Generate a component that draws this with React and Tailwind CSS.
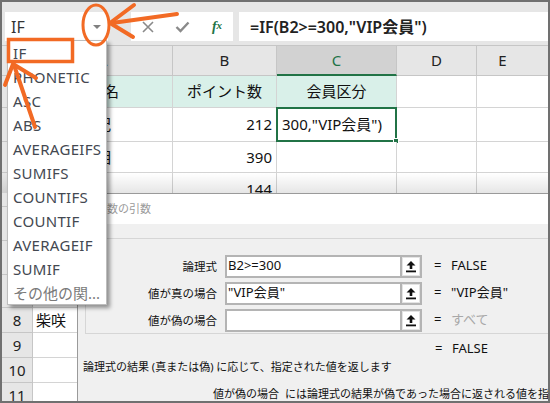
import React from "react";

const FUNCS = ["IF", "PHONETIC", "ASC", "ABS", "AVERAGEIFS", "SUMIFS", "COUNTIFS", "COUNTIF", "AVERAGEIF", "SUMIF"];

const ROWS = [
  { n: 1, h: "h-[32px]", head: true },
  { n: 2, h: "h-[34px]", a: "高橋　由紀", b: "212", active: true },
  { n: 3, h: "h-[31px]", a: "山田　明相", b: "390" },
  { n: 4, h: "h-[34px]", a: "佐藤　恵", b: "144" },
  { n: 5, h: "h-[34px]" },
  { n: 6, h: "h-[34px]" },
  { n: 7, h: "h-[33px]" },
  { n: 8, h: "h-[25px]", a: "柴咲　コウ" },
  { n: 9, h: "h-[25px]", plain: true },
  { n: 10, h: "h-[25px]", plain: true },
  { n: 11, h: "h-[25px]", plain: true },
];

function UpIcon() {
  return (
    <svg width="12" height="13" viewBox="0 0 12 13">
      <path d="M6 1 L10.5 5.5 L7.3 5.5 L7.3 9 L4.7 9 L4.7 5.5 L1.5 5.5 Z" fill="#111" />
      <rect x="1" y="10.5" width="10" height="1.8" fill="#111" />
    </svg>
  );
}

function ArgRow({ label, value, result, dim }) {
  return (
    <div className="flex items-center h-[23px]">
      <div className="w-[131px] text-right text-[11.5px] text-[#111]">{label}</div>
      <div className="ml-[8px] w-[197px] h-full flex border-2 border-[#b4b4b4] bg-white">
        <div className="flex-1 flex items-center pl-[1px] text-[13px] text-[#111] whitespace-nowrap">{value}</div>
        <div className="w-[20px] border-l-2 border-[#b4b4b4] bg-[#e4e4e4] p-[1px] flex">
          <div className="flex-1 bg-white flex items-center justify-center"><UpIcon /></div>
        </div>
      </div>
      <div className="ml-[12px] w-[10px] text-[13px] text-[#111]">=</div>
      <div className={`ml-[7px] text-[13px] whitespace-nowrap ${dim ? "text-[#a8a8a8]" : "text-[#111]"}`}>{result}</div>
    </div>
  );
}

export default function App() {
  const grid = "border-[#d4d4d4]";
  const teal = "border-[#7cbfa6]";
  return (
    <div className="relative w-[550px] h-[403px] overflow-hidden border-2 border-[#707070] bg-[#e6e6e6] font-['Noto_Sans','Noto_Sans_CJK_JP',sans-serif] text-[#111]">
      {/* formula bar */}
      <div className="flex h-[29px] mt-[10px]">
        <div className="relative ml-[3px] w-[103px] bg-white flex items-center">
          <span className="pl-[6px] text-[16px] text-[#333]">IF</span>
          <span className="absolute left-[88px] top-[13px] w-0 h-0 border-l-[4px] border-r-[4px] border-t-[4px] border-l-transparent border-r-transparent border-t-[#808080]" />
        </div>
        <div className="ml-[23px] w-[102px] bg-white flex items-center">
          <div className="w-[34px] flex justify-center">
            <svg width="12" height="12" viewBox="0 0 12 12"><path d="M1 1 L11 11 M11 1 L1 11" stroke="#8a8a8a" strokeWidth="1.6" /></svg>
          </div>
          <div className="w-[34px] flex justify-center">
            <svg width="15" height="12" viewBox="0 0 15 12"><path d="M1.5 6 L5.5 10 L13.5 1.5" stroke="#8a8a8a" strokeWidth="2.4" fill="none" /></svg>
          </div>
          <div className="w-[34px] flex justify-center pl-[2px] font-['Liberation_Serif',serif] italic font-bold text-[#217346] text-[14px] leading-none">
            f<span className="text-[11px]">x</span>
          </div>
        </div>
        <div className="ml-[6px] flex-1 bg-white flex items-center pl-[11px] text-[16px] font-semibold text-[#222] whitespace-nowrap">
          =IF(B2&gt;=300,"VIP会員")
        </div>
      </div>

      {/* column headers */}
      <div className="flex h-[31px] mt-[4px] text-[15px] text-[#222]">
        <div className="w-[31px] border-r border-b border-t border-[#c6c6c6]" />
        <div className="w-[140px] flex items-center justify-center border-r border-b border-t border-[#c6c6c6]">A</div>
        <div className="w-[104px] flex items-center justify-center border-r border-b border-t border-[#c6c6c6]">B</div>
        <div className="w-[120px] flex items-center justify-center border-r border-t border-[#c6c6c6] border-b-2 border-b-[#217346] bg-[#d2d2d2] text-[#217346]">C</div>
        <div className="w-[80px] flex items-center justify-center border-r border-b border-t border-[#c6c6c6]">D</div>
        <div className="flex-1 flex items-center justify-center border-b border-t border-[#c6c6c6] pr-[20px]">E</div>
      </div>

      {/* rows */}
      {ROWS.map((r) => (
        <div key={r.n} className={`flex ${r.h} text-[15px]`}>
          <div className="w-[31px] flex items-center justify-center bg-[#e6e6e6] border-r border-b border-[#c6c6c6] text-[#222]">{r.n}</div>
          <div className={`w-[140px] flex items-center pl-[3px] border-r ${grid} border-b ${r.plain ? grid : teal} ${r.head ? "bg-[#d9f0e9] justify-center" : "bg-white"} whitespace-nowrap overflow-hidden`}>
            {r.head ? "氏名" : r.a}
          </div>
          <div className={`w-[104px] flex items-center border-r ${grid} border-b ${r.plain ? grid : teal} ${r.head ? "bg-[#d9f0e9] justify-center" : "bg-white justify-end pr-[4px]"}`}>
            {r.head ? "ポイント数" : r.b}
          </div>
          <div className={`relative w-[120px] flex items-center border-r ${grid} border-b ${r.plain ? grid : teal} ${r.head ? "bg-[#d9f0e9] justify-center" : "bg-white"}`}>
            {r.head && "会員区分"}
            {r.active && (
              <div className="absolute -left-[1px] -top-[1px] w-[121px] h-[35px] border-2 border-[#217346] flex items-center pl-[4px] whitespace-nowrap">
                300,"VIP会員")
                <span className="absolute -right-[4px] -bottom-[4px] w-[6px] h-[6px] bg-[#217346] border border-white" />
              </div>
            )}
          </div>
          <div className={`w-[80px] bg-white border-r border-b ${grid}`} />
          <div className={`flex-1 bg-white border-b ${grid}`} />
        </div>
      ))}

      {/* dialog shadow fade on sheet */}
      <div className="absolute left-0 right-0 top-[171px] h-[20px] bg-linear-to-b from-transparent to-black/10" />

      {/* function arguments dialog */}
      <div className="absolute left-[75px] top-[191px] right-0 bottom-0 bg-[#f0f0f0] border-l border-t border-[#9a9a9a] flex flex-col">
        <div className="h-[31px] bg-white flex items-center pl-[18px] text-[11px] text-[#9a9a9a]">関数の引数</div>
        <div className="ml-[7px] mt-[14px] h-[100px] border-l border-t border-b border-[#d6d6d6] pt-[16px] flex flex-col gap-[4px]">
          <ArgRow label="論理式" value="B2>=300" result="FALSE" />
          <ArgRow label="値が真の場合" value={'"VIP会員"'} result={'"VIP会員"'} />
          <ArgRow label="値が偽の場合" value="" result="すべて" dim />
        </div>
        <div className="flex items-center h-[30px] pl-[357px] text-[13px]">
          <span className="w-[10px]">=</span>
          <span className="ml-[7px]">FALSE</span>
        </div>
        <div className="pl-[5px] -mt-[3px] text-[11px] leading-[14px] whitespace-nowrap">論理式の結果 (真または偽) に応じて、指定された値を返します</div>
        <div className="pl-[135px] mt-[13px] text-[11px] leading-[14px] whitespace-nowrap">
          <span>値が偽の場合</span>
          <span className="ml-[6px]">には論理式の結果が偽であった場合に返される値を指定します。</span>
        </div>
      </div>

      {/* name box dropdown list */}
      <div className="absolute left-[5px] top-[38px] w-[100px] h-[265px] bg-white border border-[#bdbdbd] shadow-[3px_3px_4px_rgba(0,0,0,0.4)] overflow-hidden">
        {FUNCS.map((f) => (
          <div key={f} className="h-[24px] flex items-center pl-[5px] text-[15px] tracking-[0.3px] text-[#434851] whitespace-nowrap">{f}</div>
        ))}
        <div className="h-[24px] flex items-center pl-[5px] text-[15px] text-[#7a7a7a] whitespace-nowrap">その他の関...</div>
      </div>

      {/* annotations */}
      <svg className="absolute -left-[2px] -top-[2px] pointer-events-none" width="550" height="403" viewBox="0 0 550 403">
        <g stroke="#f26a24" fill="none" strokeLinecap="round" strokeLinejoin="round">
          <ellipse cx="96" cy="25" rx="13" ry="20" strokeWidth="3" />
          <path d="M177 14 L112 23" strokeWidth="4" />
          <path d="M134 5 L110 23 L133 37" strokeWidth="4" />
          <rect x="8.5" y="39.5" width="64" height="22" strokeWidth="3.5" strokeLinecap="butt" strokeLinejoin="miter" />
          <path d="M14 65 L35 127" strokeWidth="4" />
          <path d="M5 85 L13 64 L36 78" strokeWidth="4" />
        </g>
      </svg>
    </div>
  );
}
